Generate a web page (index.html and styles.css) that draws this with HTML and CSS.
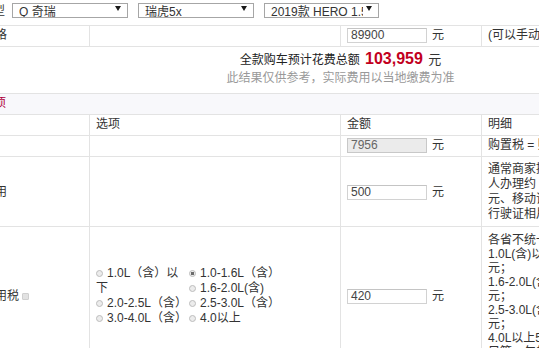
FILE: index.html
```html
<!DOCTYPE html>
<html lang="zh-CN">
<head>
<meta charset="utf-8">
<title>购车费用计算</title>
<link rel="stylesheet" href="styles.css">
</head>
<body>
<div class="page">
  <div class="top">
    <span class="top-label">选择车型</span>
    <div class="sel"><span class="sel-text">Q 奇瑞</span><i class="arr"></i></div>
    <div class="sel"><span class="sel-text">瑞虎5x</span><i class="arr"></i></div>
    <div class="sel"><span class="sel-text">2019款 HERO 1.5L 手动豪华版 国V</span><i class="arr"></i></div>
  </div>
  <table class="grid">
    <colgroup>
      <col class="w1"><col class="w2"><col class="w3"><col class="w4">
    </colgroup>
    <tr class="row">
      <td class="lbl">裸车价格</td>
      <td></td>
      <td><span class="box">89900</span><span class="unit">元</span></td>
      <td>(可以手动修改价格)</td>
    </tr>
    <tr>
      <td colspan="4" class="sum">
        <div class="sum-line">全款购车预计花费总额 <b class="total">103,959</b> <span class="yuan">元</span></div>
        <div class="sum-note">此结果仅供参考，实际费用以当地缴费为准</div>
      </td>
    </tr>
    <tr class="sec">
      <td colspan="4">必要花费项</td>
    </tr>
    <tr class="row">
      <td></td>
      <td>选项</td>
      <td>金额</td>
      <td>明细</td>
    </tr>
    <tr class="row">
      <td class="lbl">购置税</td>
      <td></td>
      <td><span class="box off">7956</span><span class="unit">元</span></td>
      <td>购置税 = 购车款/(1+13%)×购置税率(10%)</td>
    </tr>
    <tr class="row-tall">
      <td class="lbl">上牌费用</td>
      <td></td>
      <td><span class="box">500</span><span class="unit">元</span></td>
      <td class="desc">通常商家提供上牌服务，费用约500元，个<br>人办理约 373元（含牌照费、检测费100<br>元、移动证费用、拓号费、照相费及<br>行驶证相片费用等）</td>
    </tr>
    <tr class="row-big">
      <td class="lbl">车船使用税 <i class="tip"></i></td>
      <td>
        <div class="opts">
          <label class="opt"><i class="radio"></i>1.0L（含）以下</label>
          <label class="opt"><i class="radio on"></i>1.0-1.6L（含）</label>
          <label class="opt"><i class="radio"></i>1.6-2.0L(含)</label>
          <label class="opt"><i class="radio"></i>2.0-2.5L（含）</label>
          <label class="opt"><i class="radio"></i>2.5-3.0L（含）</label>
          <label class="opt"><i class="radio"></i>3.0-4.0L（含）</label>
          <label class="opt"><i class="radio"></i>4.0以上</label>
        </div>
      </td>
      <td><span class="box">420</span><span class="unit">元</span></td>
      <td class="desc small">各省不统一，以下为北京地区标准：<br>1.0L(含)以下300元；1.0-1.6L(含)420<br>元；<br>1.6-2.0L(含)480元；2.0-2.5L(含)900<br>元；<br>2.5-3.0L(含)1920元；3.0-4.0L(含)3480<br>元；<br>4.0L以上5280元。<br>只算一年的税费</td>
    </tr>
  </table>
</div>
</body>
</html>
```
FILE: styles.css
```css
html, body {
  margin: 0;
  padding: 0;
  overflow: hidden;
  background: #fff;
}
body {
  font-family: "Liberation Sans", "Noto Sans CJK SC", sans-serif;
  font-size: 12px;
  color: #333;
}
.page {
  margin-left: -52px;
  width: 784px;
}
.top {
  height: 25px;
  display: flex;
  align-items: flex-start;
  padding-left: 9px;
  box-sizing: border-box;
}
.top-label {
  width: 55px;
  line-height: 15px;
  margin-top: 4px;
}
.sel {
  width: 116px;
  height: 15px;
  margin-top: 3px;
  margin-right: 10px;
  box-sizing: border-box;
  border: 1px solid #a6a6a6;
  display: flex;
  align-items: flex-start;
  overflow: hidden;
  background: #fff;
}
.sel:last-child { margin-right: 0; width: 115px; }
.sel-text {
  flex: 1;
  min-width: 0;
  white-space: nowrap;
  overflow: hidden;
  line-height: 17px;
  padding-left: 6px;
  color: #333;
  font-size: 12px;
}
.arr {
  flex: none;
  width: 0;
  height: 0;
  border-left: 3px solid transparent;
  border-right: 3px solid transparent;
  border-top: 5px solid #1a1a1a;
  margin: 2px 6px 0 3px;
}
.grid {
  width: 784px;
  table-layout: fixed;
  border-collapse: collapse;
}
.w1 { width: 141px; }
.w2 { width: 251px; }
.w3 { width: 141px; }
.w4 { width: 251px; }
.grid td {
  border: 1px solid #e3e3e3;
  padding: 2px 6px 3px;
  line-height: 15px;
  vertical-align: middle;
  white-space: nowrap;
  overflow: hidden;
}
.grid td.lbl { padding-left: 10px; }
.box {
  display: inline-block;
  vertical-align: top;
  width: 80px;
  height: 15px;
  box-sizing: border-box;
  border: 1px solid #d2d2d2;
  border-top-color: #c4c4c4;
  padding-left: 3px;
  line-height: 13px;
  font-size: 12px;
  color: #444;
  background: #fff;
}
.box.off {
  background: #ebebeb;
  color: #666;
  border-color: #c8c8c8;
}
.unit {
  display: inline-block;
  vertical-align: top;
  margin-left: 5px;
  line-height: 15px;
}
.grid td.sum {
  text-align: center;
  padding: 2px 0 7px;
}
.sum-line {
  line-height: 20px;
  height: 20px;
  margin-bottom: 1px;
  color: #222;
}
.total {
  font-size: 16px;
  font-weight: bold;
  color: #c2001e;
  margin: 0 2px;
}
.yuan { font-size: 13px; color: #333; }
.sum-note {
  line-height: 16px;
  color: #999;
}
.sec td {
  background: #f8f8fb;
  color: #b0003a;
}
.grid .sec td { padding-left: 0; text-indent: -3px; }
.row-tall td { padding-top: 5px; padding-bottom: 4px; }
.row-big td { padding-top: 6px; padding-bottom: 3px; }
.grid td.desc { line-height: 15px; }
.grid td.desc.small { line-height: 14px; }
.tip {
  display: inline-block;
  width: 5px;
  height: 5px;
  border-radius: 1px;
  background: #e2e2e2;
  border: 1px solid #cfcfcf;
  vertical-align: 0;
}
.opts {
  display: flow-root;
  white-space: normal;
}
.opt {
  float: left;
  width: 93px;
  line-height: 15px;
  color: #333;
}
.radio {
  display: inline-block;
  width: 7px;
  height: 7px;
  box-sizing: border-box;
  border-radius: 50%;
  border: 1px solid #bdbdbd;
  background: #ececec;
  margin-right: 4px;
  vertical-align: 0;
}
.radio.on {
  background: radial-gradient(circle, #6b6b6b 0 1.5px, #ececec 2px);
}
```
